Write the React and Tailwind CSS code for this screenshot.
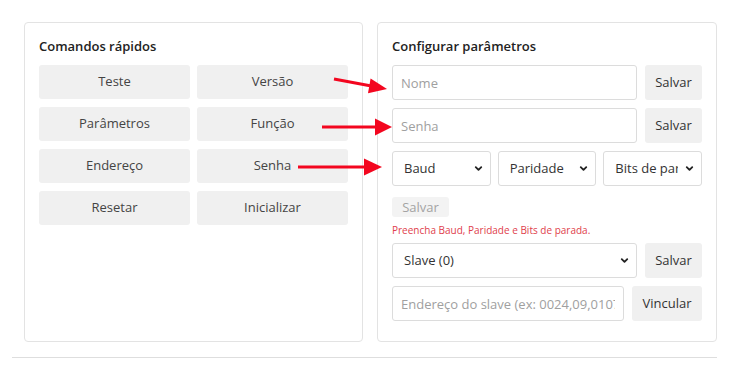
import React from "react"
import { ChevronDown } from "lucide-react"

const font = { fontFamily: '"Open Sans", "Noto Sans", sans-serif' }

function QuickButton({ label }) {
    return (
        <button className="h-[34px] rounded-[3px] bg-[#f0f0f0] text-[13px] text-[#444]">
            {label}
        </button>
    )
}

function FakeSelect({ label, className = "" }) {
    return (
        <div className={"h-[35px] flex items-center justify-between rounded-[3px] border border-[#dcdcdc] bg-white pl-[11px] pr-[6px] text-[13px] text-[#333] " + className}>
            <span className="overflow-hidden whitespace-nowrap">{label}</span>
            <ChevronDown className="w-[11px] h-[11px] shrink-0 ml-[6px] text-[#222]" strokeWidth={4} />
        </div>
    )
}

function SaveButton({ label = "Salvar", className = "w-[57px]" }) {
    return (
        <button className={"h-[35px] shrink-0 rounded-[3px] bg-[#f0f0f0] text-[13px] text-[#333] " + className}>
            {label}
        </button>
    )
}

export default function App() {
    const quick = ["Teste", "Versão", "Parâmetros", "Função", "Endereço", "Senha", "Resetar", "Inicializar"]

    return (
        <div className="relative w-[735px] h-[371px] bg-white overflow-hidden" style={font}>
            <div className="pt-[22px] pl-[24px] w-[717px] grid grid-cols-[339px_340px] gap-[14px]">
                {/* Quick commands */}
                <div className="h-[320px] rounded-[4px] border border-[#e3e3e3] p-[14px]">
                    <h2 className="text-[13px] leading-[18px] font-semibold text-[#222] mb-[10px]">Comandos rápidos</h2>
                    <div className="grid grid-cols-2 gap-x-[7px] gap-y-[8px]">
                        {quick.map((q) => (
                            <QuickButton key={q} label={q} />
                        ))}
                    </div>
                </div>

                {/* Parameters */}
                <div className="h-[320px] rounded-[4px] border border-[#e3e3e3] p-[14px]">
                    <h2 className="text-[13px] leading-[18px] font-semibold text-[#222] mb-[10px]">Configurar parâmetros</h2>
                    <div className="flex flex-col gap-[8px]">
                        <div className="flex gap-[8px]">
                            <input
                                placeholder="Nome"
                                className="h-[35px] flex-1 min-w-0 rounded-[3px] border border-[#dcdcdc] px-[8px] text-[13px] placeholder:text-[#a0a0a0] outline-none"
                            />
                            <SaveButton />
                        </div>
                        <div className="flex gap-[8px]">
                            <input
                                placeholder="Senha"
                                className="h-[35px] flex-1 min-w-0 rounded-[3px] border border-[#dcdcdc] px-[8px] text-[13px] placeholder:text-[#a0a0a0] outline-none"
                            />
                            <SaveButton />
                        </div>
                        <div className="grid grid-cols-3 gap-[7px]">
                            <FakeSelect label="Baud" />
                            <FakeSelect label="Paridade" />
                            <FakeSelect label="Bits de parada" />
                        </div>
                        <div>
                            <button className="h-[20px] w-[57px] rounded-[3px] bg-[#f3f3f3] text-[13px] leading-[20px] text-[#a3a3a3]">Salvar</button>
                        </div>
                        <p className="-my-[2px] text-[10px] leading-[13px] text-[#e0404c]">Preencha Baud, Paridade e Bits de parada.</p>
                        <div className="flex gap-[8px]">
                            <FakeSelect label="Slave (0)" className="flex-1" />
                            <SaveButton />
                        </div>
                        <div className="flex gap-[8px]">
                            <input
                                placeholder="Endereço do slave (ex: 0024,09,0107)"
                                className="h-[35px] flex-1 min-w-0 rounded-[3px] border border-[#dcdcdc] px-[8px] text-[13px] placeholder:text-[#a0a0a0] outline-none"
                            />
                            <SaveButton label="Vincular" className="w-[70px]" />
                        </div>
                    </div>
                </div>
            </div>

            <div className="mt-[15px] ml-[12px] w-[705px] h-px bg-[#dedede]" />

            {/* Red annotation arrows */}
            <svg className="absolute inset-0 pointer-events-none" width="735" height="371">
                <g fill="#f3061f" stroke="#f3061f">
                    <line x1="334" y1="79" x2="370" y2="85.8" strokeWidth="3" />
                    <polygon points="387,89 368,93.2 370.6,78.4" stroke="none" />
                    <line x1="322" y1="127" x2="376" y2="127" strokeWidth="3" />
                    <polygon points="392,127 375,118.5 375,135.5" stroke="none" />
                    <line x1="298" y1="167" x2="365" y2="167" strokeWidth="3" />
                    <polygon points="382,167 364,158.5 364,175.5" stroke="none" />
                </g>
            </svg>
        </div>
    )
}
